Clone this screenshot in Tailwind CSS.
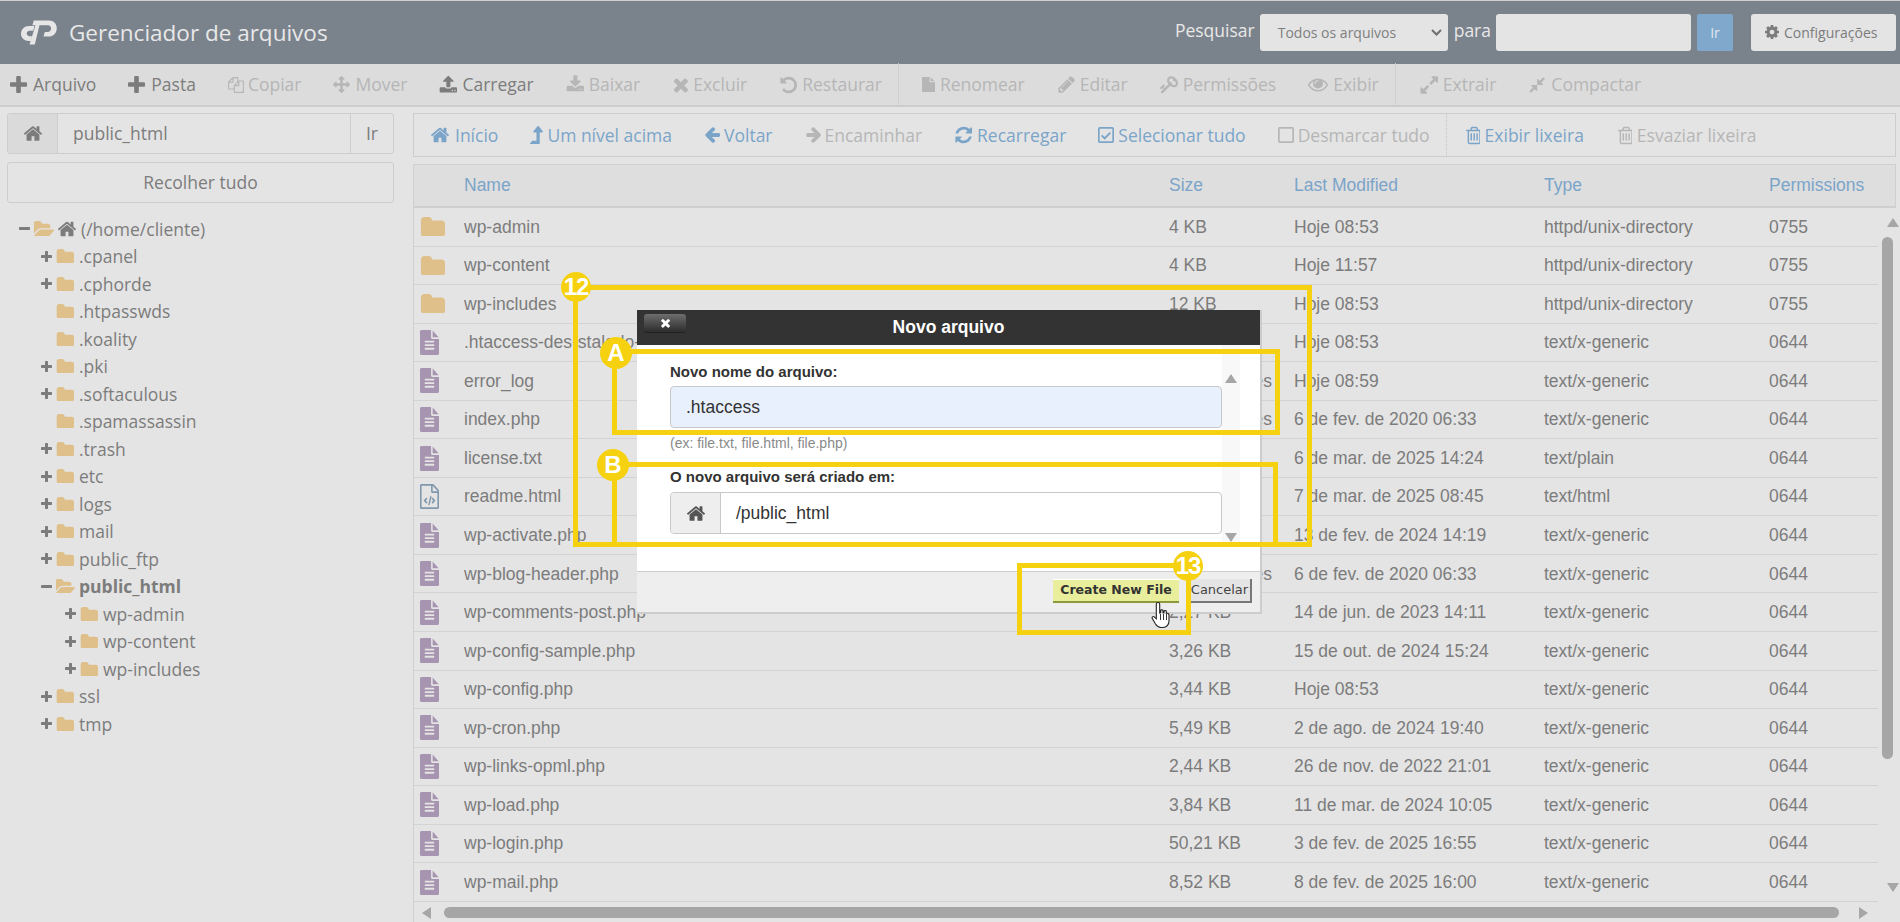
<!DOCTYPE html>
<html lang="pt-BR">
<head>
<meta charset="utf-8">
<title>Gerenciador de arquivos</title>
<script src="https://cdn.jsdelivr.net/npm/@tailwindcss/browser@4"></script>
</head>
<body class="m-0 bg-[#e4e4e4]">
<svg class="hidden" xmlns="http://www.w3.org/2000/svg">
<symbol id="plus" viewBox="192 192 1408 1408"><path d="M1600 736v192q0 40-28 68t-68 28h-416v416q0 40-28 68t-68 28h-192q-40 0-68-28t-28-68v-416h-416q-40 0-68-28t-28-68v-192q0-40 28-68t68-28h416v-416q0-40 28-68t68-28h192q40 0 68 28t28 68v416h416q40 0 68 28t28 68z" transform="translate(0 64)"/></symbol>
<symbol id="minus" viewBox="192 640 1408 384"><path d="M1600 736v192q0 40-28 68t-68 28h-1216q-40 0-68-28t-28-68v-192q0-40 28-68t68-28h1216q40 0 68 28t28 68z"/></symbol>
<symbol id="home" viewBox="0 192 1792 1408"><path d="M1472 992v480q0 26-19 45t-45 19h-384v-384h-256v384h-384q-26 0-45-19t-19-45v-480q0-1 .5-3t.5-3l575-474 575 474q1 2 1 6zm223-69l-62 74q-8 9-21 11h-3q-13 0-21-7l-692-577-692 577q-12 8-24 7-13-2-21-11l-62-74q-8-10-7-23.5t11-21.5l719-599q32-26 76-26t76 26l244 204v-195q0-14 9-23t23-9h192q14 0 23 9t9 23v408l219 182q10 8 11 21.5t-7 23.5z"/></symbol>
<symbol id="folder" viewBox="0 128 1728 1344" preserveAspectRatio="none"><path d="M1728 608v704q0 92-66 158t-158 66h-1216q-92 0-158-66t-66-158v-960q0-92 66-158t158-66h320q92 0 158 66t66 158v32h672q92 0 158 66t66 158z"/></symbol>
<symbol id="folder-open" viewBox="0 128 1815 1344" preserveAspectRatio="none"><path d="M1815 952q0 31-31 66l-336 396q-43 51-120.500 86.500t-143.500 35.500h-1088q-34 0-60.500-13t-26.500-43q0-31 31-66l336-396q43-51 120.500-86.500t143.500-35.500h1088q34 0 60.500 13t26.500 43zm-343-344v160h-832q-94 0-197 47.500t-164 119.500l-337 396-5 6q0-4-.5-12.500t-.5-12.500v-960q0-92 66-158t158-66h320q92 0 158 66t66 158v32h544q92 0 158 66t66 158z"/></symbol>
<symbol id="file-text" viewBox="128 0 1536 1792" preserveAspectRatio="none"><path d="M1596 476q14 14 28 36h-472v-472q22 14 36 28zm-476 164h544v1056q0 40-28 68t-68 28h-1344q-40 0-68-28t-28-68v-1600q0-40 28-68t68-28h800v544q0 40 28 68t68 28zm160 736v-64q0-14-9-23t-23-9h-704q-14 0-23 9t-9 23v64q0 14 9 23t23 9h704q14 0 23-9t9-23zm0-256v-64q0-14-9-23t-23-9h-704q-14 0-23 9t-9 23v64q0 14 9 23t23 9h704q14 0 23-9t9-23zm0-256v-64q0-14-9-23t-23-9h-704q-14 0-23 9t-9 23v64q0 14 9 23t23 9h704q14 0 23-9t9-23z"/></symbol>
<symbol id="file-code" viewBox="128 0 1536 1792" preserveAspectRatio="none"><path d="M1596 380q28 28 48 76t20 88v1152q0 40-28 68t-68 28h-1344q-40 0-68-28t-28-68v-1600q0-40 28-68t68-28h896q40 0 88 20t76 48zm-444-244v376h376q-10-29-22-41l-313-313q-12-12-41-22zm384 1528v-1024h-416q-40 0-68-28t-28-68v-416h-768v1536h1280z"/><path d="M640 960l-224 224 224 224 90-90-134-134 134-134zM1152 960l224 224-224 224-90-90 134-134-134-134zM960 860l-170 640 110 30 170-640z"/></symbol>
<symbol id="file" viewBox="0 0 1536 1792"><path d="M1024 512v-472q22 14 36 28l408 408q14 14 28 36h-472zm-128 32q0 40 28 68t68 28h544v1056q0 40-28 68t-68 28h-1344q-40 0-68-28t-28-68v-1600q0-40 28-68t68-28h800v544z"/></symbol>
<symbol id="copy" viewBox="0 0 1792 1792"><path d="M1696 384q40 0 68 28t28 68v1216q0 40-28 68t-68 28h-960q-40 0-68-28t-28-68v-288h-544q-40 0-68-28t-28-68v-672q0-40 20-88t48-76l408-408q28-28 76-48t88-20h416q40 0 68 28t28 68v328q68-40 128-40h416zm-544 213l-299 299h299v-299zm-640-384l-299 299h299v-299zm196 647l316-316v-416h-384v416q0 40-28 68t-68 28h-416v640h512v-256q0-40 20-88t48-76zm956 804v-1152h-384v416q0 40-28 68t-68 28h-416v640h896z"/></symbol>
<symbol id="arrows" viewBox="0 0 1792 1792"><path d="M1792 896q0 26-19 45l-256 256q-19 19-45 19t-45-19-19-45v-128h-384v384h128q26 0 45 19t19 45-19 45l-256 256q-19 19-45 19t-45-19l-256-256q-19-19-19-45t19-45 45-19h128v-384h-384v128q0 26-19 45t-45 19-45-19l-256-256q-19-19-19-45t19-45l256-256q19-19 45-19t45 19 19 45v128h384v-384h-128q-26 0-45-19t-19-45 19-45l256-256q19-19 45-19t45 19l256 256q19 19 19 45t-19 45-45 19h-128v384h384v-128q0-26 19-45t45-19 45 19l256 256q19 19 19 45z"/></symbol>
<symbol id="upload" viewBox="0 128 1728 1536"><path d="M1344 1472q0-26-19-45t-45-19-45 19-19 45 19 45 45 19 45-19 19-45zm256 0q0-26-19-45t-45-19-45 19-19 45 19 45 45 19 45-19 19-45zm128-224v320q0 40-28 68t-68 28h-1472q-40 0-68-28t-28-68v-320q0-40 28-68t68-28h427q21 56 70.500 92t110.500 36h256q61 0 110.500-36t70.500-92h427q40 0 68 28t28 68zm-325-648q-17 40-59 40h-256v448q0 26-19 45t-45 19h-256q-26 0-45-19t-19-45v-448h-256q-42 0-59-40-17-39 14-69l448-448q18-19 45-19t45 19l448 448q31 30 14 69z"/></symbol>
<symbol id="download" viewBox="0 128 1728 1536"><path d="M1344 1344q0-26-19-45t-45-19-45 19-19 45 19 45 45 19 45-19 19-45zm256 0q0-26-19-45t-45-19-45 19-19 45 19 45 45 19 45-19 19-45zm128-224v320q0 40-28 68t-68 28h-1472q-40 0-68-28t-28-68v-320q0-40 28-68t68-28h465l135 136q58 56 136 56t136-56l136-136h464q40 0 68 28t28 68zm-325-569q17 41-14 70l-448 448q-18 19-45 19t-45-19l-448-448q-31-29-14-70 17-39 59-39h256v-448q0-26 19-45t45-19h256q26 0 45 19t19 45v448h256q42 0 59 39z"/></symbol>
<symbol id="times" viewBox="150 240 1340 1340"><path d="M1490 1322q0 40-28 68l-136 136q-28 28-68 28t-68-28l-294-294-294 294q-28 28-68 28t-68-28l-136-136q-28-28-28-68t28-68l294-294-294-294q-28-28-28-68t28-68l136-136q28-28 68-28t68 28l294 294 294-294q28-28 68-28t68 28l136 136q28 28 28 68t-28 68l-294 294 294 294q28 28 28 68z"/></symbol>
<symbol id="undo" viewBox="0 128 1664 1536"><path d="M1664 896q0 156-61 298t-164 245-245 164-298 61q-172 0-327-72.500t-264-204.500q-7-10-6.500-22.500t8.500-20.500l137-138q10-9 25-9 16 2 23 12 73 95 179 147t225 52q104 0 198.500-40.500t163.500-109.500 109.500-163.500 40.500-198.500-40.500-198.500-109.500-163.500-163.500-109.500-198.500-40.500q-98 0-188 35.500t-160 101.500l137 138q31 30 14 69-17 40-59 40h-448q-26 0-45-19t-19-45v-448q0-42 40-59 39-17 69 14l130 129q107-101 244.500-156.500t284.500-55.500q156 0 298 61t245 164 164 245 61 298z"/></symbol>
<symbol id="pencil" viewBox="0 128 1664 1536"><path d="M491 1536l91-91-235-235-91 91v107h128v128h107zm523-928q0-22-22-22-10 0-17 7l-542 542q-7 7-7 17 0 22 22 22 10 0 17-7l542-542q7-7 7-17zm-54-192l416 416-832 832h-416v-416zm683 96q0 53-37 90l-166 166-416-416 166-165q36-38 90-38 53 0 91 38l235 234q37 39 37 91z"/></symbol>
<symbol id="key" viewBox="0 128 1683 1536"><path d="M832 512q0-80-56-136t-136-56-136 56-56 136q0 42 19 83-41-19-83-19-80 0-136 56t-56 136 56 136 136 56 136-56 56-136q0-42-19-83 41 19 83 19 80 0 136-56t56-136zm851 704q0 17-49 66t-66 49q-9 0-28.500-16t-36.500-33-38.500-40-24.500-26l-96 96 220 220q28 28 28 68 0 42-39 81t-81 39q-40 0-68-28l-671-671q-176 131-365 131-163 0-265.500-102.500t-102.500-265.500q0-160 95-313t248-248 313-95q163 0 265.500 102.500t102.500 265.500q0 189-131 365l355 355 96-96q-3-3-26-24.500t-40-38.500-33-36.500-16-28.500q0-17 49-66t66-49q13 0 23 10 6 6 46 44.500t82 79.500 86.500 86 73 78 28.500 41z"/></symbol>
<symbol id="eye" viewBox="0 256 1792 1280"><path d="M1664 960q-152-236-381-353 61 104 61 225 0 185-131.500 316.500t-316.500 131.500-316.500-131.500-131.500-316.500q0-121 61-225-229 117-381 353 133 205 333.500 326.500t434.500 121.500 434.500-121.500 333.500-326.500zm-720-384q0-20-14-34t-34-14q-125 0-214.500 89.500t-89.500 214.500q0 20 14 34t34 14 34-14 14-34q0-86 61-147t147-61q20 0 34-14t14-34zm848 384q0 34-20 69-140 230-376.500 368.500t-499.500 138.500-499.500-139-376.500-368q-20-35-20-69t20-69q140-229 376.500-368t499.500-139 499.500 139 376.500 368q20 35 20 69z" transform="translate(0 -64)"/></symbol>
<symbol id="expand" viewBox="0 128 1664 1536"><path d="M883 1056q0 13-10 23l-332 332 144 144q19 19 19 45t-19 45-45 19h-448q-26 0-45-19t-19-45v-448q0-26 19-45t45-19 45 19l144 144 332-332q10-10 23-10t23 10l114 114q10 10 10 23zm781-864v448q0 26-19 45t-45 19-45-19l-144-144-332 332q-10 10-23 10t-23-10l-114-114q-10-10-10-23t10-23l332-332-144-144q-19-19-19-45t19-45 45-19h448q26 0 45 19t19 45z"/></symbol>
<symbol id="compress" viewBox="0 192 1664 1408"><path d="M896 960v448q0 26-19 45t-45 19-45-19l-144-144-332 332q-10 10-23 10t-23-10l-114-114q-10-10-10-23t10-23l332-332-144-144q-19-19-19-45t19-45 45-19h448q26 0 45 19t19 45zm755-672q0 13-10 23l-332 332 144 144q19 19 19 45t-19 45-45 19h-448q-26 0-45-19t-19-45v-448q0-26 19-45t45-19 45 19l144 144 332-332q10-10 23-10t23 10l114 114q10 10 10 23z"/></symbol>
<symbol id="arrow-left" viewBox="64 256 1600 1408"><path d="M1664 896v128q0 53-32.500 90.500t-84.500 37.500h-704l293 294q38 36 38 90t-38 90l-75 76q-37 37-90 37-52 0-91-37l-651-652q-37-37-37-90 0-52 37-91l651-650q38-38 91-38 52 0 90 38l75 74q38 38 38 91t-38 91l-293 293h704q52 0 84.500 37.500t32.500 90.500z"/></symbol>
<symbol id="arrow-right" viewBox="0 256 1600 1408"><path d="M1600 960q0 54-37 91l-651 651q-39 37-91 37-51 0-90-37l-75-75q-38-38-38-91t38-91l293-293h-704q-52 0-84.500-37.500t-32.500-90.500v-128q0-53 32.500-90.500t84.500-37.500h704l-293-294q-38-36-38-90t38-90l75-75q38-38 90-38 53 0 91 38l651 651q37 35 37 90z"/></symbol>
<symbol id="level-up" viewBox="0 128 1027 1408" preserveAspectRatio="none"><path d="M1018 603q-18 37-58 37h-192v864q0 14-9 23t-23 9h-704q-21 0-29-18-8-20 4-35l160-192q9-11 25-11h320v-640h-192q-40 0-58-37-17-37 9-68l320-384q18-22 49-22t49 22l320 384q27 32 9 68z"/></symbol>
<symbol id="refresh" viewBox="0 128 1664 1536"><path d="M1639 1056q0 5-1 7-64 268-268 434.500t-478 166.500q-146 0-282.500-55t-243.500-157l-129 129q-19 19-45 19t-45-19-19-45v-448q0-26 19-45t45-19h448q26 0 45 19t19 45-19 45l-137 137q71 66 161 102t187 36q134 0 250-65t186-179q11-17 53-117 8-23 30-23h192q13 0 22.500 9.500t9.500 22.500zm25-800v448q0 26-19 45t-45 19h-448q-26 0-45-19t-19-45 19-45l138-138q-148-137-349-137-134 0-250 65t-186 179q-11 17-53 117-8 23-30 23h-199q-13 0-22.500-9.500t-9.500-22.500v-7q65-268 270-434.500t480-166.500q146 0 284 55.500t245 156.500l130-129q19-19 45-19t45 19 19 45z"/></symbol>
<symbol id="check-square" viewBox="0 128 1536 1536"><path d="M160 128h1216a160 160 0 0 1 160 160v1216a160 160 0 0 1-160 160h-1216a160 160 0 0 1-160-160v-1216a160 160 0 0 1 160-160zm0 160v1216h1216v-1216z"/><path d="M640 1340l-350-350 130-130 220 220 476-476 130 130z"/></symbol>
<symbol id="square" viewBox="0 128 1536 1536"><path d="M160 128h1216a160 160 0 0 1 160 160v1216a160 160 0 0 1-160 160h-1216a160 160 0 0 1-160-160v-1216a160 160 0 0 1 160-160zm0 160v1216h1216v-1216z"/></symbol>
<symbol id="trash" viewBox="0 128 1408 1536"><path d="M704 736v576q0 14-9 23t-23 9h-64q-14 0-23-9t-9-23v-576q0-14 9-23t23-9h64q14 0 23 9t9 23zm256 0v576q0 14-9 23t-23 9h-64q-14 0-23-9t-9-23v-576q0-14 9-23t23-9h64q14 0 23 9t9 23zm256 0v576q0 14-9 23t-23 9h-64q-14 0-23-9t-9-23v-576q0-14 9-23t23-9h64q14 0 23 9t9 23zm128 724v-948h-896v948q0 22 7 40.500t14.500 27 10.500 8.500h832q3 0 10.500-8.500t14.500-27 7-40.500zm-672-1076h448l-48-117q-7-9-17-11h-317q-10 2-17 11zm928 32v64q0 14-9 23t-23 9h-96v948q0 83-47 143.500t-113 60.500h-832q-66 0-113-58.500t-47-141.500v-952h-96q-14 0-23-9t-9-23v-64q0-14 9-23t23-9h309l70-167q15-37 54-63t79-26h320q40 0 79 26t54 63l70 167h309q14 0 23 9t9 23z"/></symbol>
<symbol id="gear" viewBox="128 128 1536 1536"><path d="M1152 896q0-106-75-181t-181-75-181 75-75 181 75 181 181 75 181-75 75-181zm512-109v222q0 12-8 23t-20 13l-185 28q-19 54-39 91 35 50 107 138 10 12 10 25t-9 23q-27 37-99 108t-94 71q-12 0-26-9l-138-108q-44 23-91 38-16 136-29 186-7 28-36 28h-222q-14 0-24.500-8.500t-11.500-21.500l-28-184q-49-16-90-37l-141 107q-10 9-25 9-14 0-25-11-126-114-165-168-7-10-7-23 0-12 8-23 15-21 51-66.500t54-70.500q-27-50-41-99l-183-27q-13-2-21-12.500t-8-23.500v-222q0-12 8-23t19-13l186-28q14-46 39-92-40-57-107-138-10-12-10-24 0-10 9-23 26-36 98.500-107.500t94.500-71.500q13 0 26 10l138 107q44-23 91-38 16-136 29-186 7-28 36-28h222q14 0 24.500 8.500t11.500 21.500l28 184q49 16 90 37l142-107q9-9 24-9 13 0 25 10 129 119 165 170 7 8 7 22 0 12-8 23-15 21-51 66.500t-54 70.500q26 50 41 98l183 28q13 2 21 12.500t8 23.500z"/></symbol>
</svg>

<div class="relative w-[1900px] h-[922px] overflow-hidden bg-[#e4e4e4] font-['Open_Sans',sans-serif] text-[17.5px] text-[#7c7c7c]">

  <!-- top bar -->
  <header class="h-[64px] bg-[#7a828c] flex items-center border-t border-[#cfcfcf]">
    <svg class="ml-[20px] w-[37px] h-[25px] fill-[#e6e6e6] shrink-0" viewBox="0 0 37 25"><path d="M14.500 6H9C4.500 6 1 9.300 1 13.800S4.500 21 9 21h1.800l1.400-4.800H9.700c-1.700 0-3-1.100-3-2.600s1.300-2.800 3-2.800h3.500z"/><path d="M13.800 0.500H29c4.700 0 7.800 3.400 7.800 7.700 0 4.700-3.500 8.300-8.300 8.300h-5l1.300-4.600h3c1.800 0 3.300-1.500 3.300-3.400 0-1.800-1.200-3.300-3-3.300H19.500L14.800 24.500H9.500L15.500 5.200H12.400z"/></svg>
    <div class="ml-[12px] text-[22.500px] text-[#e8e8e8]">Gerenciador de arquivos</div>
    <div class="ml-auto flex items-center text-[#e8e8e8] pb-[1px]">
      <span class="text-[17.5px] mr-[5px] -mt-[3px]">Pesquisar</span>
      <div class="relative w-[188px] h-[37px] bg-[#e4e4e4] rounded-[3px] flex items-center pl-[18px] text-[14px] text-[#808080]">Todos os arquivos
        <svg class="absolute right-[6px] top-[15px] w-[11px] h-[7px] fill-none stroke-[#6e6e6e] stroke-2" viewBox="0 0 11 7"><path d="M1 1l4.500 4.500L10 1"/></svg>
      </div>
      <span class="text-[17.5px] ml-[6px] mr-[5px] -mt-[3px]">para</span>
      <div class="w-[195px] h-[37px] bg-[#e4e4e4] rounded-[3px]"></div>
      <div class="ml-[6px] w-[36px] h-[37px] bg-[#7fa8cc] rounded-[2px] flex items-center justify-center text-[14px] text-[#dfe8ef]">Ir</div>
      <div class="ml-[18px] mr-[4px] w-[145px] h-[37px] bg-[#e4e4e4] rounded-[3px] flex items-center pl-[14px] gap-[5px] text-[14px] text-[#7c7c7c]">
        <svg class="w-[14px] h-[14px] fill-current"><use href="#gear"/></svg>Configurações
      </div>
    </div>
  </header>

  <!-- main toolbar -->
  <nav class="h-[43px] bg-[#dcdcdc] border-b-2 border-[#cdcdcd] flex items-center pl-[10px] gap-[32px] text-[#b6b6b6]">
    <div class="flex items-center gap-[6px] text-[#7c7c7c]"><svg class="w-[17px] h-[17px] fill-current"><use href="#plus"/></svg>Arquivo</div>
    <div class="flex items-center gap-[6px] text-[#7c7c7c]"><svg class="w-[17px] h-[17px] fill-current"><use href="#plus"/></svg>Pasta</div>
    <div class="flex items-center gap-[4px]"><svg class="w-[16px] h-[20px] fill-current"><use href="#copy"/></svg>Copiar</div>
    <div class="flex items-center gap-[5px]"><svg class="w-[17px] h-[19px] fill-current"><use href="#arrows"/></svg>Mover</div>
    <div class="flex items-center gap-[5px] text-[#7c7c7c]"><svg class="w-[18px] h-[19px] fill-current"><use href="#upload"/></svg>Carregar</div>
    <div class="flex items-center gap-[5px]"><svg class="w-[18px] h-[19px] fill-current"><use href="#download"/></svg>Baixar</div>
    <div class="flex items-center gap-[5px]"><svg class="w-[16px] h-[16px] fill-current"><use href="#times"/></svg>Excluir</div>
    <div class="flex items-center gap-[5px]"><svg class="w-[18px] h-[18px] fill-current"><use href="#undo"/></svg>Restaurar</div>
    <div class="w-px h-[43px] border-l border-dotted border-[#c4c4c4] -ml-[16px] -mr-[9px]"></div>
    <div class="flex items-center gap-[5px]"><svg class="w-[13px] h-[19px] fill-current"><use href="#file"/></svg>Renomear</div>
    <div class="flex items-center gap-[5px]"><svg class="w-[18px] h-[19px] fill-current"><use href="#pencil"/></svg>Editar</div>
    <div class="flex items-center gap-[5px]"><svg class="w-[18px] h-[19px] fill-current -scale-x-100"><use href="#key"/></svg>Permissões</div>
    <div class="flex items-center gap-[5px]"><svg class="w-[20px] h-[16px] fill-current"><use href="#eye"/></svg>Exibir</div>
    <div class="w-px h-[43px] border-l border-dotted border-[#c4c4c4] -ml-[16px] -mr-[9px]"></div>
    <div class="flex items-center gap-[5px]"><svg class="w-[19px] h-[20px] fill-current"><use href="#expand"/></svg>Extrair</div>
    <div class="flex items-center gap-[6px]"><svg class="w-[17px] h-[18px] fill-current"><use href="#compress"/></svg>Compactar</div>
  </nav>

  <div class="flex">
    <!-- left column -->
    <aside class="w-[413px] shrink-0 pl-[7px] pr-[19px] pt-[6px]">
      <div class="h-[41px] border border-[#cdcdcd] rounded-[3px] flex items-stretch">
        <div class="w-[50px] bg-[#dadada] border-r border-[#cdcdcd] flex items-center justify-center rounded-l-[3px]"><svg class="w-[20px] h-[17px] fill-[#7c7c7c]"><use href="#home"/></svg></div>
        <div class="flex-1 flex items-center pl-[15px]">public_html</div>
        <div class="w-[43px] border-l border-[#cdcdcd] flex items-center justify-center">Ir</div>
      </div>
      <div class="mt-[8px] h-[41px] border border-[#cdcdcd] rounded-[3px] flex items-center justify-center">Recolher tudo</div>
      <ul class="mt-[12px] pl-[12px]">
        <li class="h-[27.500px] flex items-center"><svg class="w-[11px] h-[3px] ml-[0px] fill-[#7c7c7c]"><use href="#minus"/></svg><svg class="w-[20px] h-[15px] ml-[4px] fill-[#dfc08a]"><use href="#folder-open"/></svg><svg class="w-[20px] h-[16px] ml-[3px] fill-[#7c7c7c]"><use href="#home"/></svg><span class="ml-[4px]">(/home/cliente)</span></li>
        <li class="h-[27.500px] flex items-center pl-[22px]"><svg class="w-[11px] h-[11px] fill-[#7c7c7c]"><use href="#plus"/></svg><svg class="w-[18px] h-[14px] ml-[4px] fill-[#dfc08a]"><use href="#folder"/></svg><span class="ml-[5px]">.cpanel</span></li>
        <li class="h-[27.500px] flex items-center pl-[22px]"><svg class="w-[11px] h-[11px] fill-[#7c7c7c]"><use href="#plus"/></svg><svg class="w-[18px] h-[14px] ml-[4px] fill-[#dfc08a]"><use href="#folder"/></svg><span class="ml-[5px]">.cphorde</span></li>
        <li class="h-[27.500px] flex items-center pl-[37px]"><svg class="w-[18px] h-[14px] fill-[#dfc08a]"><use href="#folder"/></svg><span class="ml-[5px]">.htpasswds</span></li>
        <li class="h-[27.500px] flex items-center pl-[37px]"><svg class="w-[18px] h-[14px] fill-[#dfc08a]"><use href="#folder"/></svg><span class="ml-[5px]">.koality</span></li>
        <li class="h-[27.500px] flex items-center pl-[22px]"><svg class="w-[11px] h-[11px] fill-[#7c7c7c]"><use href="#plus"/></svg><svg class="w-[18px] h-[14px] ml-[4px] fill-[#dfc08a]"><use href="#folder"/></svg><span class="ml-[5px]">.pki</span></li>
        <li class="h-[27.500px] flex items-center pl-[22px]"><svg class="w-[11px] h-[11px] fill-[#7c7c7c]"><use href="#plus"/></svg><svg class="w-[18px] h-[14px] ml-[4px] fill-[#dfc08a]"><use href="#folder"/></svg><span class="ml-[5px]">.softaculous</span></li>
        <li class="h-[27.500px] flex items-center pl-[37px]"><svg class="w-[18px] h-[14px] fill-[#dfc08a]"><use href="#folder"/></svg><span class="ml-[5px]">.spamassassin</span></li>
        <li class="h-[27.500px] flex items-center pl-[22px]"><svg class="w-[11px] h-[11px] fill-[#7c7c7c]"><use href="#plus"/></svg><svg class="w-[18px] h-[14px] ml-[4px] fill-[#dfc08a]"><use href="#folder"/></svg><span class="ml-[5px]">.trash</span></li>
        <li class="h-[27.500px] flex items-center pl-[22px]"><svg class="w-[11px] h-[11px] fill-[#7c7c7c]"><use href="#plus"/></svg><svg class="w-[18px] h-[14px] ml-[4px] fill-[#dfc08a]"><use href="#folder"/></svg><span class="ml-[5px]">etc</span></li>
        <li class="h-[27.500px] flex items-center pl-[22px]"><svg class="w-[11px] h-[11px] fill-[#7c7c7c]"><use href="#plus"/></svg><svg class="w-[18px] h-[14px] ml-[4px] fill-[#dfc08a]"><use href="#folder"/></svg><span class="ml-[5px]">logs</span></li>
        <li class="h-[27.500px] flex items-center pl-[22px]"><svg class="w-[11px] h-[11px] fill-[#7c7c7c]"><use href="#plus"/></svg><svg class="w-[18px] h-[14px] ml-[4px] fill-[#dfc08a]"><use href="#folder"/></svg><span class="ml-[5px]">mail</span></li>
        <li class="h-[27.500px] flex items-center pl-[22px]"><svg class="w-[11px] h-[11px] fill-[#7c7c7c]"><use href="#plus"/></svg><svg class="w-[18px] h-[14px] ml-[4px] fill-[#dfc08a]"><use href="#folder"/></svg><span class="ml-[5px]">public_ftp</span></li>
        <li class="h-[27.500px] flex items-center pl-[22px]"><svg class="w-[11px] h-[3px] fill-[#7c7c7c]"><use href="#minus"/></svg><svg class="w-[19px] h-[14px] ml-[4px] fill-[#dfc08a]"><use href="#folder-open"/></svg><span class="ml-[4px] font-bold">public_html</span></li>
        <li class="h-[27.500px] flex items-center pl-[46px]"><svg class="w-[11px] h-[11px] fill-[#7c7c7c]"><use href="#plus"/></svg><svg class="w-[18px] h-[14px] ml-[4px] fill-[#dfc08a]"><use href="#folder"/></svg><span class="ml-[5px]">wp-admin</span></li>
        <li class="h-[27.500px] flex items-center pl-[46px]"><svg class="w-[11px] h-[11px] fill-[#7c7c7c]"><use href="#plus"/></svg><svg class="w-[18px] h-[14px] ml-[4px] fill-[#dfc08a]"><use href="#folder"/></svg><span class="ml-[5px]">wp-content</span></li>
        <li class="h-[27.500px] flex items-center pl-[46px]"><svg class="w-[11px] h-[11px] fill-[#7c7c7c]"><use href="#plus"/></svg><svg class="w-[18px] h-[14px] ml-[4px] fill-[#dfc08a]"><use href="#folder"/></svg><span class="ml-[5px]">wp-includes</span></li>
        <li class="h-[27.500px] flex items-center pl-[22px]"><svg class="w-[11px] h-[11px] fill-[#7c7c7c]"><use href="#plus"/></svg><svg class="w-[18px] h-[14px] ml-[4px] fill-[#dfc08a]"><use href="#folder"/></svg><span class="ml-[5px]">ssl</span></li>
        <li class="h-[27.500px] flex items-center pl-[22px]"><svg class="w-[11px] h-[11px] fill-[#7c7c7c]"><use href="#plus"/></svg><svg class="w-[18px] h-[14px] ml-[4px] fill-[#dfc08a]"><use href="#folder"/></svg><span class="ml-[5px]">tmp</span></li>
      </ul>
    </aside>

    <!-- right column -->
    <main class="w-[1485px] pr-[2px] pt-[6px]">
      <div class="h-[44px] border border-[#cdcdcd] flex items-center pl-[16px] gap-[32px] text-[#7ba4c9]">
        <div class="flex items-center gap-[5px]"><svg class="w-[20px] h-[16px] fill-current"><use href="#home"/></svg>Início</div>
        <div class="flex items-center gap-[4px]"><svg class="w-[13px] h-[18px] fill-current"><use href="#level-up"/></svg>Um nível acima</div>
        <div class="flex items-center gap-[4px]"><svg class="w-[16px] h-[16px] fill-current"><use href="#arrow-left"/></svg>Voltar</div>
        <div class="flex items-center gap-[4px] text-[#b6b6b6]"><svg class="w-[16px] h-[16px] fill-current"><use href="#arrow-right"/></svg>Encaminhar</div>
        <div class="flex items-center gap-[5px]"><svg class="w-[18px] h-[18px] fill-current"><use href="#refresh"/></svg>Recarregar</div>
        <div class="flex items-center gap-[4px]"><svg class="w-[16px] h-[16px] fill-current"><use href="#check-square"/></svg>Selecionar tudo</div>
        <div class="flex items-center gap-[4px] text-[#b6b6b6]"><svg class="w-[16px] h-[16px] fill-current"><use href="#square"/></svg>Desmarcar tudo</div>
        <div class="w-px h-[43px] border-l border-dotted border-[#c4c4c4] -ml-[16px] -mr-[15px]"></div>
        <div class="flex items-center gap-[5px]"><svg class="w-[16px] h-[19px] fill-current"><use href="#trash"/></svg>Exibir lixeira</div>
        <div class="flex items-center gap-[5px] text-[#b6b6b6]"><svg class="w-[16px] h-[19px] fill-current"><use href="#trash"/></svg>Esvaziar lixeira</div>
      </div>
      <div class="relative mt-[7px] h-[759px] border-l border-[#cfcfcf] font-['Liberation_Sans',sans-serif]">
        <div class="grid grid-cols-[50px_705px_125px_250px_225px_128px] h-[44px] items-center bg-[#dedede] border-t border-r border-b-2 border-[#cfcfcf] text-[#7ba4c9]">
          <div></div><div>Name</div><div>Size</div><div>Last Modified</div><div>Type</div><div>Permissions</div>
        </div>
        <div class="w-[1464px] [&>div]:grid [&>div]:grid-cols-[50px_705px_125px_250px_225px_108px] [&>div]:h-[38.560px] [&>div]:items-center [&>div]:border-b [&>div]:border-[#d3d3d3]">
          <div><svg class="ml-[6px] w-[25px] h-[19px] fill-[#dfc08a]"><use href="#folder"/></svg><span>wp-admin</span><span>4 KB</span><span>Hoje 08:53</span><span>httpd/unix-directory</span><span>0755</span></div>
          <div><svg class="ml-[6px] w-[25px] h-[19px] fill-[#dfc08a]"><use href="#folder"/></svg><span>wp-content</span><span>4 KB</span><span>Hoje 11:57</span><span>httpd/unix-directory</span><span>0755</span></div>
          <div><svg class="ml-[6px] w-[25px] h-[19px] fill-[#dfc08a]"><use href="#folder"/></svg><span>wp-includes</span><span>12 KB</span><span>Hoje 08:53</span><span>httpd/unix-directory</span><span>0755</span></div>
          <div><svg class="ml-[6px] w-[19px] h-[25px] fill-[#a794b0]"><use href="#file-text"/></svg><span>.htaccess-des-stalado-wp</span><span>1 KB</span><span>Hoje 08:53</span><span>text/x-generic</span><span>0644</span></div>
          <div><svg class="ml-[6px] w-[19px] h-[25px] fill-[#a794b0]"><use href="#file-text"/></svg><span>error_log</span><span class="pl-[27px]">405 bytes</span><span>Hoje 08:59</span><span>text/x-generic</span><span>0644</span></div>
          <div><svg class="ml-[6px] w-[19px] h-[25px] fill-[#a794b0]"><use href="#file-text"/></svg><span>index.php</span><span class="pl-[27px]">405 bytes</span><span>6 de fev. de 2020 06:33</span><span>text/x-generic</span><span>0644</span></div>
          <div><svg class="ml-[6px] w-[19px] h-[25px] fill-[#a794b0]"><use href="#file-text"/></svg><span>license.txt</span><span>19,9 KB</span><span>6 de mar. de 2025 14:24</span><span>text/plain</span><span>0644</span></div>
          <div><svg class="ml-[6px] w-[19px] h-[25px] fill-[#8097ad]"><use href="#file-code"/></svg><span>readme.html</span><span>7,4 KB</span><span>7 de mar. de 2025 08:45</span><span>text/html</span><span>0644</span></div>
          <div><svg class="ml-[6px] w-[19px] h-[25px] fill-[#a794b0]"><use href="#file-text"/></svg><span>wp-activate.php</span><span>7,2 KB</span><span>13 de fev. de 2024 14:19</span><span>text/x-generic</span><span>0644</span></div>
          <div><svg class="ml-[6px] w-[19px] h-[25px] fill-[#a794b0]"><use href="#file-text"/></svg><span>wp-blog-header.php</span><span class="pl-[27px]">351 bytes</span><span>6 de fev. de 2020 06:33</span><span>text/x-generic</span><span>0644</span></div>
          <div><svg class="ml-[6px] w-[19px] h-[25px] fill-[#a794b0]"><use href="#file-text"/></svg><span>wp-comments-post.php</span><span>2,27 KB</span><span>14 de jun. de 2023 14:11</span><span>text/x-generic</span><span>0644</span></div>
          <div><svg class="ml-[6px] w-[19px] h-[25px] fill-[#a794b0]"><use href="#file-text"/></svg><span>wp-config-sample.php</span><span>3,26 KB</span><span>15 de out. de 2024 15:24</span><span>text/x-generic</span><span>0644</span></div>
          <div><svg class="ml-[6px] w-[19px] h-[25px] fill-[#a794b0]"><use href="#file-text"/></svg><span>wp-config.php</span><span>3,44 KB</span><span>Hoje 08:53</span><span>text/x-generic</span><span>0644</span></div>
          <div><svg class="ml-[6px] w-[19px] h-[25px] fill-[#a794b0]"><use href="#file-text"/></svg><span>wp-cron.php</span><span>5,49 KB</span><span>2 de ago. de 2024 19:40</span><span>text/x-generic</span><span>0644</span></div>
          <div><svg class="ml-[6px] w-[19px] h-[25px] fill-[#a794b0]"><use href="#file-text"/></svg><span>wp-links-opml.php</span><span>2,44 KB</span><span>26 de nov. de 2022 21:01</span><span>text/x-generic</span><span>0644</span></div>
          <div><svg class="ml-[6px] w-[19px] h-[25px] fill-[#a794b0]"><use href="#file-text"/></svg><span>wp-load.php</span><span>3,84 KB</span><span>11 de mar. de 2024 10:05</span><span>text/x-generic</span><span>0644</span></div>
          <div><svg class="ml-[6px] w-[19px] h-[25px] fill-[#a794b0]"><use href="#file-text"/></svg><span>wp-login.php</span><span>50,21 KB</span><span>3 de fev. de 2025 16:55</span><span>text/x-generic</span><span>0644</span></div>
          <div><svg class="ml-[6px] w-[19px] h-[25px] fill-[#a794b0]"><use href="#file-text"/></svg><span>wp-mail.php</span><span>8,52 KB</span><span>8 de fev. de 2025 16:00</span><span>text/x-generic</span><span>0644</span></div>
        </div>
        <!-- scrollbars -->
        <div class="absolute left-[1473px] top-[54px] w-0 h-0 border-x-[6px] border-x-transparent border-b-[9px] border-b-[#a6a6a6]"></div>
        <div class="absolute left-[1468px] top-[73px] w-[11px] h-[522px] rounded-full bg-[#a6a6a6]"></div>
        <div class="absolute left-[1473px] top-[719px] w-0 h-0 border-x-[6px] border-x-transparent border-t-[9px] border-t-[#a6a6a6]"></div>
        <div class="absolute left-[8px] top-[743px] w-0 h-0 border-y-[6px] border-y-transparent border-r-[9px] border-r-[#a6a6a6]"></div>
        <div class="absolute left-[30px] top-[743px] w-[1395px] h-[11px] rounded-full bg-[#a6a6a6]"></div>
        <div class="absolute left-[1445px] top-[743px] w-0 h-0 border-y-[6px] border-y-transparent border-l-[9px] border-l-[#a6a6a6]"></div>
      </div>
    </main>
  </div>

  <!-- dialog -->
  <section class="absolute left-[637px] top-[310px] w-[625px] h-[304px] bg-white flex flex-col border-r-2 border-b-2 border-[#cccccc] font-['Liberation_Sans',sans-serif]">
    <div class="relative h-[35px] shrink-0 bg-[#333333] flex items-center justify-center text-[17.5px] font-bold text-white">Novo arquivo
      <div class="absolute left-[7px] top-[4px] w-[42px] h-[19px] rounded-[3px] bg-gradient-to-b from-[#6e6e6e] to-[#2e2e2e] border-b border-[#222] flex items-center justify-center"><svg class="w-[10px] h-[10px] fill-white"><use href="#times"/></svg></div>
    </div>
    <div class="relative flex-1 pl-[33px] pt-[18px] text-[#333333]">
      <div class="text-[15px] font-bold leading-[18px]">Novo nome do arquivo:</div>
      <div class="mt-[5px] w-[552px] h-[42px] rounded-[4px] border border-[#c8c8c8] bg-[#e8f0fe] flex items-center pl-[15px] text-[17.5px]">.htaccess</div>
      <div class="mt-[6px] text-[14px] leading-[18px] text-[#8a8a8a]">(ex: file.txt, file.html, file.php)</div>
      <div class="mt-[16px] text-[15px] font-bold leading-[18px]">O novo arquivo será criado em:</div>
      <div class="mt-[6px] w-[552px] h-[42px] rounded-[4px] border border-[#c8c8c8] flex items-stretch text-[17.5px]">
        <div class="w-[50px] bg-[#eeeeee] border-r border-[#c8c8c8] rounded-l-[4px] flex items-center justify-center"><svg class="w-[20px] h-[17px] fill-[#555555]"><use href="#home"/></svg></div>
        <div class="flex-1 flex items-center pl-[15px]">/public_html</div>
      </div>
      <div class="absolute left-[585px] top-0 bottom-[24px] w-[18px] bg-[#f8f8f8]"></div>
      <div class="absolute left-[588px] top-[29px] w-0 h-0 border-x-[6px] border-x-transparent border-b-[9px] border-b-[#a6a6a6]"></div>
      <div class="absolute left-[588px] top-[188px] w-0 h-0 border-x-[6px] border-x-transparent border-t-[9px] border-t-[#a6a6a6]"></div>
    </div>
    <div class="h-[41px] shrink-0 bg-[#eeeeee] border-t border-[#cccccc] flex items-center justify-end pr-[8px] pb-[2px] font-['DejaVu_Sans',sans-serif] text-[13px]">
      <div class="w-[126px] h-[24px] bg-[#e8ee9c] border-t border-white border-b-2 border-b-[#8c9a3a] flex items-center justify-center font-bold text-[#333] whitespace-nowrap text-[12.500px]">Create New File</div>
      <div class="ml-[10px] w-[63px] h-[24px] bg-[#e4e4e4] border-r-2 border-b-2 border-[#777777] flex items-center justify-center text-[#444]">Cancelar</div>
    </div>
  </section>

  <!-- annotations -->
  <div class="absolute left-[573px] top-[285px] w-[739px] h-[262px] border-[5px] border-[#f5d10f]"></div>
  <div class="absolute left-[612px] top-[349px] w-[668px] h-[86px] border-[5px] border-[#f5d10f]"></div>
  <div class="absolute left-[612px] top-[462px] w-[666px] h-[85px] border-[5px] border-[#f5d10f]"></div>
  <div class="absolute left-[1017px] top-[563px] w-[174px] h-[72px] border-[5px] border-[#f5d10f]"></div>
  <div class="absolute left-[561px] top-[272px] w-[30px] h-[30px] rounded-full bg-[#f5d10f] flex items-center justify-center text-white font-bold text-[24px] font-['Liberation_Sans',sans-serif] tracking-[-1px]">12</div>
  <div class="absolute left-[600px] top-[337px] w-[32px] h-[32px] rounded-full bg-[#f5d10f] flex items-center justify-center text-white font-bold text-[24px] font-['Liberation_Sans',sans-serif]">A</div>
  <div class="absolute left-[597px] top-[449px] w-[32px] h-[32px] rounded-full bg-[#f5d10f] flex items-center justify-center text-white font-bold text-[24px] font-['Liberation_Sans',sans-serif]">B</div>
  <div class="absolute left-[1173px] top-[551px] w-[30px] h-[30px] rounded-full bg-[#f5d10f] flex items-center justify-center text-white font-bold text-[24px] font-['Liberation_Sans',sans-serif] tracking-[-1px]">13</div>

  <!-- pointer -->
  <svg class="absolute left-[1151px] top-[601px] w-[20px] h-[28px]" viewBox="0 0 20 28"><path d="M7 1.500c1 0 1.700.7 1.700 1.700V12l1-.2V9.500c0-1 2.300-1 2.300 0V12l1-.1v-1.700c0-1 2.300-1 2.300 0v2.200l.8-.1c1-.1 1.900.7 1.900 1.700V20c0 3.500-2.500 6.500-6 6.500H10c-2.500 0-4-1.200-5.500-3.500L1.300 17.500c-.8-1.300.8-2.700 2-1.600l2 1.900V3.200c0-1 .7-1.700 1.700-1.700z" fill="#fff" stroke="#222" stroke-width="1.100"/><path d="M9.500 13v6M12.500 13v6M15.500 13v6" stroke="#222" stroke-width="0.900" fill="none"/></svg>
</div>
</body>
</html>
